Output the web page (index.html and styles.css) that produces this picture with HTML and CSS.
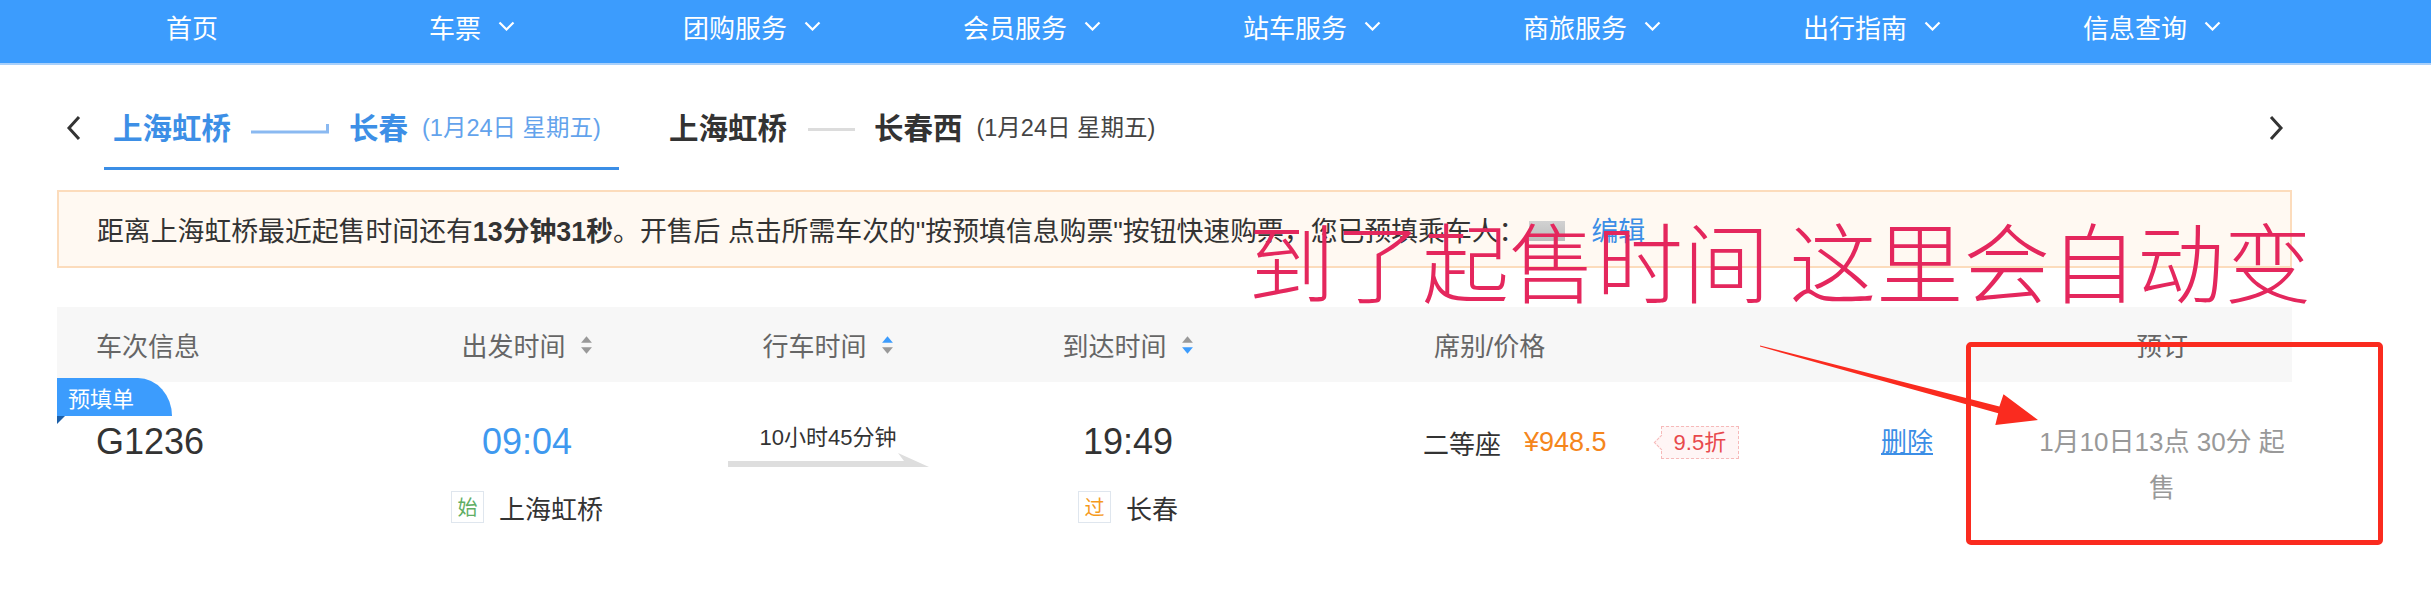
FILE: index.html
```html
<!DOCTYPE html>
<html lang="zh-CN">
<head>
    <meta charset="UTF-8">
    <meta name="viewport" content="width=device-width, initial-scale=1.0">
    <title>预填单 - 车票预订</title>
    <link rel="stylesheet" href="styles.css">
</head>
<body>
<div class="shot">
    <!-- 顶部导航 -->
    <nav class="nav">
        <ul>
            <li>首页</li>
            <li>车票<svg class="caret" viewBox="0 0 17 10"><polyline points="1.5,1.5 8.5,8.5 15.5,1.5"/></svg></li>
            <li>团购服务<svg class="caret" viewBox="0 0 17 10"><polyline points="1.5,1.5 8.5,8.5 15.5,1.5"/></svg></li>
            <li>会员服务<svg class="caret" viewBox="0 0 17 10"><polyline points="1.5,1.5 8.5,8.5 15.5,1.5"/></svg></li>
            <li>站车服务<svg class="caret" viewBox="0 0 17 10"><polyline points="1.5,1.5 8.5,8.5 15.5,1.5"/></svg></li>
            <li>商旅服务<svg class="caret" viewBox="0 0 17 10"><polyline points="1.5,1.5 8.5,8.5 15.5,1.5"/></svg></li>
            <li>出行指南<svg class="caret" viewBox="0 0 17 10"><polyline points="1.5,1.5 8.5,8.5 15.5,1.5"/></svg></li>
            <li>信息查询<svg class="caret" viewBox="0 0 17 10"><polyline points="1.5,1.5 8.5,8.5 15.5,1.5"/></svg></li>
        </ul>
    </nav>

    <main class="page">
        <!-- 行程切换 -->
        <div class="route-bar">
            <span class="route-arrow"><svg viewBox="0 0 16 26"><polyline points="13,2 3,13 13,24"/></svg></span>
            <div class="route-tab active">
                <span class="station">上海虹桥</span>
                <svg class="route-line" viewBox="0 0 78 14"><polyline points="0,11 76.5,11 76.5,3"/></svg>
                <span class="station">长春</span>
                <span class="date">(1月24日 星期五)</span>
            </div>
            <div class="route-tab">
                <span class="station">上海虹桥</span>
                <span class="route-dash"></span>
                <span class="station">长春西</span>
                <span class="date">(1月24日 星期五)</span>
            </div>
            <span class="route-arrow next"><svg viewBox="0 0 16 26"><polyline points="3,2 13,13 3,24"/></svg></span>
        </div>

        <!-- 起售提示 -->
        <div class="notice">
            距离上海虹桥最近起售时间还有<b>13分钟31秒</b>。开售后 点击所需车次的"按预填信息购票"按钮快速购票，您已预填乘车人：<span class="masked"></span><a class="link">编辑</a>
        </div>

        <!-- 车次列表 -->
        <div class="train-table">
            <div class="thead">
                <div class="th c1">车次信息</div>
                <div class="th c2">出发时间<svg class="sort" viewBox="0 0 12 18"><path d="M6 1 11 7H1Z"/><path d="M6 17 11 11H1Z"/></svg></div>
                <div class="th c3">行车时间<svg class="sort up" viewBox="0 0 12 18"><path d="M6 1 11 7H1Z"/><path d="M6 17 11 11H1Z"/></svg></div>
                <div class="th c4">到达时间<svg class="sort down" viewBox="0 0 12 18"><path d="M6 1 11 7H1Z"/><path d="M6 17 11 11H1Z"/></svg></div>
                <div class="th c5">席别/价格</div>
                <div class="th c6"></div>
                <div class="th c7">预订</div>
            </div>

            <div class="row">
                <span class="badge">预填单</span>
                <div class="td c1"><span class="train-no">G1236</span></div>
                <div class="td c2">
                    <span class="time start">09:04</span>
                    <span class="stop"><i class="stop-tag begin">始</i>上海虹桥</span>
                </div>
                <div class="td c3">
                    <span class="duration">10小时45分钟</span>
                    <svg class="duration-line" viewBox="0 0 201 14"><path d="M0 8H176L170 0L201 14H0Z"/></svg>
                </div>
                <div class="td c4">
                    <span class="time">19:49</span>
                    <span class="stop"><i class="stop-tag pass">过</i>长春</span>
                </div>
                <div class="td c5">
                    <span class="seat">二等座</span>
                    <span class="price">¥948.5</span>
                    <span class="discount">9.5折</span>
                </div>
                <div class="td c6"><a class="link del">删除</a></div>
                <div class="td c7">1月10日13点 30分 起<br>售</div>
            </div>
        </div>
    </main>

    <!-- 截图上的标注 -->
    <div class="mark-text">到了起售时间 这里会自动变</div>
    <svg class="mark-arrow" viewBox="0 0 2431 600">
        <polygon points="1760,345.4 1999.4,406.4 2003.5,394.3 2038,420 1995.3,425.1 1998.2,413.2 1760,346.6"/>
    </svg>
    <div class="mark-box"></div>
</div>
</body>
</html>
```

FILE: styles.css
```css
:root {
    --nav-blue: #3c9cfd;
    --link-blue: #3b8ee6;
    --text-color: #333;
    --muted: #999;
    --mark-red: #fa2b1f;
}

* {
    box-sizing: border-box;
    margin: 0;
    padding: 0;
}

body {
    font-family: "Liberation Sans", "Noto Sans CJK SC", sans-serif;
    color: var(--text-color);
    background-color: #fff;
}

.shot {
    position: relative;
    width: 2431px;
    height: 600px;
    overflow: hidden;
}

/* 导航 */
.nav {
    height: 65px;
    background-color: var(--nav-blue);
    border-bottom: 2px solid #a9d0fa;
}

.nav ul {
    display: flex;
    list-style: none;
    padding-left: 52px;
}

.nav li {
    width: 280px;
    height: 52px;
    display: flex;
    align-items: center;
    justify-content: center;
    font-family: "Noto Sans CJK SC", sans-serif;
    font-size: 26px;
    color: #fff;
}

.caret {
    width: 17px;
    height: 10px;
    margin-left: 17px;
    fill: none;
    stroke: #fff;
    stroke-width: 2.2;
}

/* 主体 */
.page {
    margin-left: 57px;
    width: 2235px;
}

.route-bar {
    display: flex;
    height: 105px;
}

.route-arrow {
    display: flex;
    align-items: center;
    padding-top: 20px;
    margin-left: 9px;
}

.route-arrow svg {
    width: 16px;
    height: 26px;
    fill: none;
    stroke: #333;
    stroke-width: 3;
}

.route-arrow.next {
    margin-left: auto;
    margin-right: 8px;
}

.route-tab {
    display: flex;
    align-items: center;
    padding: 20px 18px 0 9px;
    border-bottom: 3px solid transparent;
    font-family: "Noto Sans CJK SC", sans-serif;
}

.route-tab:first-of-type {
    margin-left: 22px;
}

.route-tab + .route-tab {
    margin-left: 41px;
}

.route-tab.active {
    border-bottom-color: var(--link-blue);
}

.station {
    font-size: 29.5px;
    font-weight: bold;
    color: #333;
}

.route-tab.active .station {
    color: #3d8fe6;
}

.route-line {
    width: 78px;
    height: 14px;
    margin: 4px 20px 0;
    fill: none;
    stroke: #8ab9f1;
    stroke-width: 3;
}

.route-dash {
    width: 47px;
    height: 3px;
    margin: 6px 19px 0 21px;
    background-color: #dcdcdc;
}

.date {
    margin-left: 14px;
    font-family: "Liberation Sans", "Noto Sans CJK SC", sans-serif;
    font-size: 23.5px;
    color: #444;
}

.route-tab.active .date {
    color: #63a3ec;
}

/* 提示框 */
.notice {
    display: flex;
    align-items: center;
    height: 78px;
    margin-top: 20px;
    padding-left: 38px;
    border: 2px solid #fcdcbc;
    background-color: #fff9f2;
    font-size: 26.85px;
    white-space: nowrap;
}

.notice b {
    font-weight: bold;
}

.masked {
    display: inline-block;
    width: 36px;
    height: 20px;
    margin: 4px 26px 0 4px;
    background: linear-gradient(#d2d2d2, #bdbdbd);
}

.link {
    color: var(--link-blue);
    cursor: pointer;
}

/* 车次表 */
.train-table {
    margin-top: 39px;
}

.thead,
.row {
    display: grid;
    grid-template-columns: 323px 294px 308px 292px 526px 232px 1fr;
}

.thead {
    height: 75px;
    align-items: center;
    background-color: #f7f7f7;
    font-size: 26px;
    color: #666;
}

.th {
    display: flex;
    align-items: center;
    justify-content: center;
}

.th.c1 {
    justify-content: flex-start;
    padding-left: 39px;
}

.th.c5 {
    justify-content: flex-start;
    padding-left: 160px;
}

.sort {
    width: 13px;
    height: 20px;
    margin-left: 14px;
    fill: #999;
}

.sort.up path:first-child,
.sort.down path:last-child {
    fill: var(--nav-blue);
}

.row {
    position: relative;
    height: 180px;
    padding-top: 35px;
    align-items: start;
}

.badge {
    position: absolute;
    top: -4px;
    left: 0;
    width: 115px;
    height: 38px;
    padding-left: 11px;
    background-color: var(--nav-blue);
    border-radius: 0 34px 0 0 / 0 38px 0 0;
    font-family: "Noto Sans CJK SC", sans-serif;
    font-size: 22px;
    line-height: 38px;
    color: #fff;
}

.badge::after {
    content: "";
    position: absolute;
    left: 0;
    top: 38px;
    border-top: 8px solid #1c5fa8;
    border-left: 8px solid transparent;
    transform: scaleX(-1);
}

.td {
    display: flex;
    flex-direction: column;
    align-items: center;
}

.td.c1 {
    align-items: flex-start;
    padding-left: 39px;
}

.train-no,
.time {
    font-size: 36px;
    line-height: 50px;
    color: #333;
}

.time.start {
    color: #3f99ef;
}

.stop {
    display: flex;
    align-items: center;
    height: 36px;
    margin-top: 22px;
    font-family: "Noto Sans CJK SC", sans-serif;
    font-size: 26px;
}

.stop-tag {
    width: 33px;
    height: 32px;
    margin-right: 15px;
    border: 1px solid #dfe6ee;
    font-style: normal;
    font-size: 20px;
    line-height: 30px;
    text-align: center;
}

.stop-tag.begin {
    color: #5fae64;
}

.stop-tag.pass {
    color: #f59a1d;
}

.duration {
    margin-top: 6px;
    font-size: 22px;
    line-height: 30px;
}

.duration-line {
    width: 201px;
    height: 14px;
    fill: #dedede;
}

.td.c5 {
    flex-direction: row;
    height: 50px;
    padding-left: 149px;
    align-items: center;
    font-size: 26px;
}

.seat {
    font-family: "Noto Sans CJK SC", sans-serif;
}

.price {
    margin-left: 23px;
    font-size: 27px;
    color: #f5861c;
}

.discount {
    position: relative;
    margin-left: 54px;
    padding: 0 12px;
    height: 33px;
    line-height: 31px;
    border: 1px dashed #f6b9b9;
    background-color: #fff5f5;
    font-size: 22px;
    color: #e8494c;
}

.discount::before {
    content: "";
    position: absolute;
    left: -6px;
    top: 10px;
    width: 10px;
    height: 10px;
    background-color: #fff5f5;
    border-left: 1px dashed #f6b9b9;
    border-bottom: 1px dashed #f6b9b9;
    transform: rotate(45deg);
}

.td.c6 {
    align-items: flex-start;
    padding-left: 81px;
    font-size: 26px;
    line-height: 50px;
}

.del {
    text-decoration: underline;
}

.td.c7 {
    display: block;
    padding-top: 2px;
    text-align: center;
    font-size: 26px;
    line-height: 46px;
    color: var(--muted);
}

/* 标注层 */
.mark-text {
    position: absolute;
    left: 1248px;
    top: 216px;
    font-family: "Noto Sans CJK SC", sans-serif;
    font-weight: 300;
    font-size: 87px;
    line-height: 87px;
    color: #e4275d;
    white-space: nowrap;
}

.mark-arrow {
    position: absolute;
    left: 0;
    top: 0;
    width: 2431px;
    height: 600px;
    fill: var(--mark-red);
    pointer-events: none;
}

.mark-box {
    position: absolute;
    left: 1966px;
    top: 342px;
    width: 417px;
    height: 203px;
    border: 5px solid var(--mark-red);
    border-radius: 5px;
}
```
